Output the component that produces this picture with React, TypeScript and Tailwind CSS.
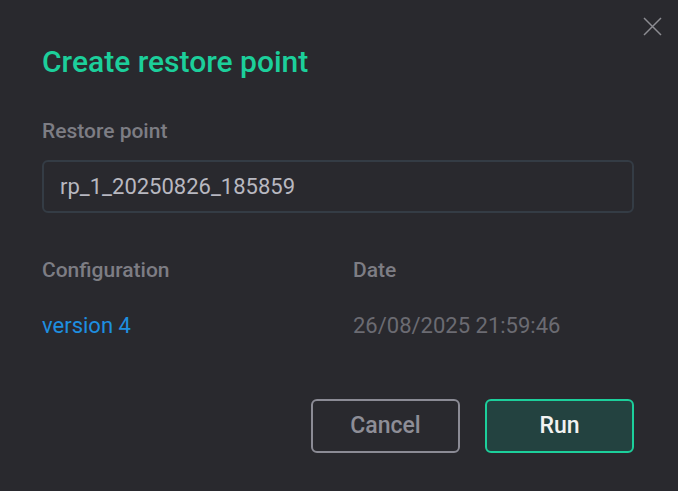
export default function App() {
  return (
    <div
      className="relative w-[678px] h-[491px] overflow-hidden bg-[#29292e] pl-[42px] pr-[44px] pt-[43px]"
      style={{ fontFamily: "Roboto, 'Liberation Sans', sans-serif" }}
    >
      {/* close */}
      <button className="absolute right-[16px] top-[17px] w-[19px] h-[19px]">
        <svg width="19" height="19" viewBox="0 0 19 19" className="block">
          <path d="M1 1L18 18M18 1L1 18" stroke="#8c8c92" strokeWidth="1.5" />
        </svg>
      </button>

      <h1 className="text-[30px] leading-[38px] font-medium text-[#1ccf9b]">
        Create restore point
      </h1>

      <label className="block mt-[38px] text-[21px] leading-[24px] font-medium text-[#7d7d84]">
        Restore point
      </label>
      <div className="mt-[17px] h-[53px] rounded-[6px] border-2 border-[#343c45] flex items-center px-[16px]">
        <span className="text-[22px] text-[#b8b8c0]">rp_1_20250826_185859</span>
      </div>

      <div className="mt-[45px] grid grid-cols-[311px_1fr]">
        <div className="text-[21px] leading-[24px] font-medium text-[#7d7d84]">Configuration</div>
        <div className="text-[21px] leading-[24px] font-medium text-[#7d7d84]">Date</div>
        <div className="mt-[30px] text-[22px] leading-[28px] text-[#1e8fe0]">version 4</div>
        <div className="mt-[30px] text-[22px] leading-[28px] text-[#6b6b72]">26/08/2025 21:59:46</div>
      </div>

      <div className="mt-[59px] flex justify-end gap-[25px]">
        <button className="w-[149px] h-[54px] rounded-[6px] border-2 border-[#8b8b95] text-[23px] font-medium text-[#8e8e97]">
          Cancel
        </button>
        <button className="w-[149px] h-[54px] rounded-[6px] border-2 border-[#1ccf9b] bg-[#234240] text-[23px] font-medium text-[#f2f2f2]">
          Run
        </button>
      </div>
    </div>
  );
}
